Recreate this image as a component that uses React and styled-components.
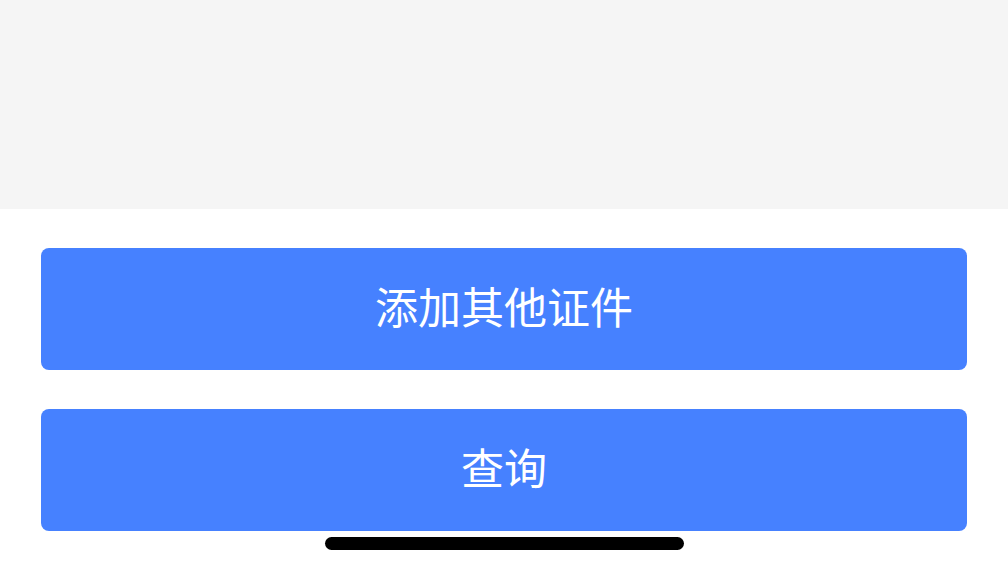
import React from "react";
import styled, { createGlobalStyle } from "styled-components";

const Global = createGlobalStyle`
  html, body { margin: 0; padding: 0; background: #ffffff; }
  body { font-family: "Noto Sans CJK SC", "Noto Sans", sans-serif; }
`;

const Page = styled.div`
  width: 1008px;
  height: 571px;
  display: flex;
  flex-direction: column;
  background: #ffffff;
  overflow: hidden;
`;

const TopArea = styled.div`
  height: 209px;
  background: #f5f5f5;
  flex-shrink: 0;
`;

const Actions = styled.div`
  display: flex;
  flex-direction: column;
  gap: 39px;
  padding: 39px 41px 0 41px;
`;

const Button = styled.button`
  height: 122px;
  border: none;
  border-radius: 8px;
  background: #4681ff;
  color: #ffffff;
  font-family: "Noto Sans CJK SC", "Noto Sans", sans-serif;
  font-size: 43px;
  font-weight: 400;
  line-height: 1;
  display: flex;
  align-items: center;
  justify-content: center;
  padding: 0 0 7px 0;
  cursor: pointer;
`;

const HomeBar = styled.div`
  width: 359px;
  height: 13px;
  border-radius: 7px;
  background: #000000;
  margin: 6px auto 0;
`;

export default function App() {
  return (
    <>
      <Global />
      <Page>
        <TopArea />
        <Actions>
          <Button>添加其他证件</Button>
          <Button>查询</Button>
        </Actions>
        <HomeBar />
      </Page>
    </>
  );
}
